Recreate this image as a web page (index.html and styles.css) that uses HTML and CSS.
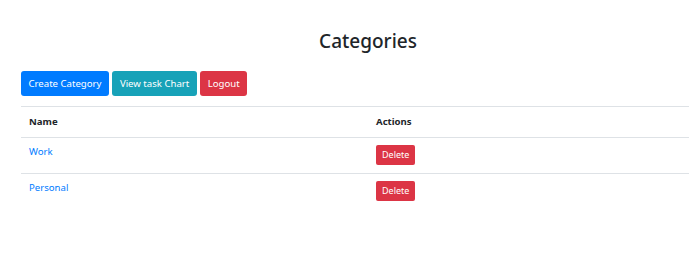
FILE: index.html
```html
<!DOCTYPE html>
<html lang="en">
<head>
    <meta charset="UTF-8">
    <title>Categories</title>
    <link rel="stylesheet" href="styles.css">
</head>
<body>
    <div class="page">
        <h2>Categories</h2>

        <div class="toolbar">
            <a href="#" class="btn btn-primary">Create Category</a>
            <a href="#" class="btn btn-info">View task Chart</a>
            <a href="#" class="btn btn-danger">Logout</a>
        </div>

        <table class="table">
            <thead>
                <tr>
                    <th class="col-name">Name</th>
                    <th>Actions</th>
                </tr>
            </thead>
            <tbody>
                <tr>
                    <td><a href="#">Work</a></td>
                    <td><button class="btn btn-danger btn-sm">Delete</button></td>
                </tr>
                <tr>
                    <td><a href="#">Personal</a></td>
                    <td><button class="btn btn-danger btn-sm">Delete</button></td>
                </tr>
            </tbody>
        </table>
    </div>
</body>
</html>
```

FILE: styles.css
```css
body {
    font-family: "Noto Sans", "Open Sans", sans-serif;
    margin: 0;
    padding: 0;
    background-color: #fff;
    color: #212529;
    overflow: hidden;
}

.page {
    width: 694px;
    padding: 0 0 0 21px;
}

h2 {
    text-align: center;
    font-size: 19px;
    font-weight: 500;
    margin: 28px 0 17px;
    line-height: 26px;
}

.toolbar {
    display: flex;
    gap: 3.5px;
    margin-bottom: 10px;
}

.btn {
    display: inline-block;
    font-family: inherit;
    font-size: 9.6px;
    line-height: 25px;
    height: 25px;
    padding: 0 7.5px;
    border: none;
    border-radius: 3px;
    color: #fff;
    text-decoration: none;
    cursor: pointer;
}

.btn-primary {
    background-color: #007bff;
}

.btn-info {
    background-color: #17a2b8;
}

.btn-danger {
    background-color: #dc3545;
}

.btn-sm {
    font-size: 9px;
    height: 20px;
    line-height: 20px;
    padding: 0 6px;
    border-radius: 2px;
    vertical-align: top;
}

.table {
    width: 100%;
    border-collapse: collapse;
    font-size: 9.6px;
}

.table th {
    text-align: left;
    font-weight: 700;
    padding: 8px;
    line-height: 14px;
    border-top: 1px solid #dee2e6;
    border-bottom: 1px solid #dee2e6;
}

.table td {
    padding: 7px 8px 8px;
    line-height: 20px;
    border-top: 1px solid #dee2e6;
    vertical-align: top;
}

.table td a {
    color: #007bff;
    text-decoration: none;
    display: inline-block;
    line-height: 14px;
    vertical-align: top;
}

.col-name {
    width: 331px;
}
```
